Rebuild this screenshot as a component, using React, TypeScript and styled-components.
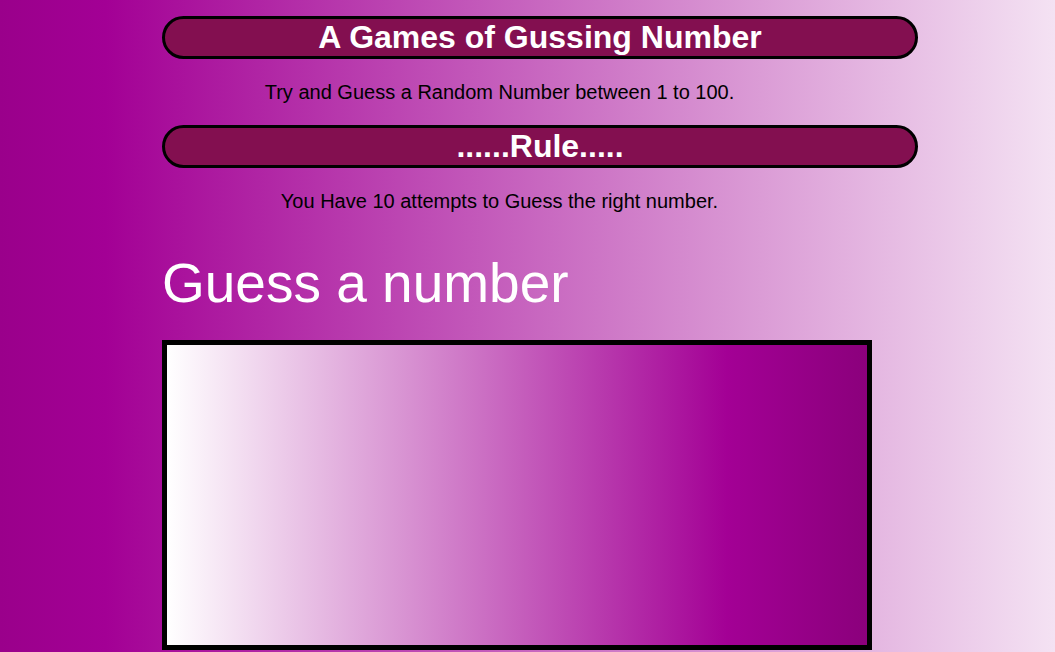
import React from "react";
import styled, { createGlobalStyle } from "styled-components";

const GlobalStyle = createGlobalStyle`
  * {
    box-sizing: border-box;
  }

  body {
    margin: 0;
    font-family: "Liberation Sans", Arial, sans-serif;
  }
`;

const Page = styled.main`
  display: flex;
  flex-direction: column;
  min-height: 100vh;
  padding: 16px 137px 2px 162px;
  background: linear-gradient(90deg, #9a008b 0%, #a30095 10%, #f4e2f3 100%);
`;

const Intro = styled.section`
  display: flex;
  flex-direction: column;
  gap: 22px;
`;

const Banner = styled.h1`
  margin: 0;
  border: 3px solid #000;
  border-radius: 24px;
  background: #830f50;
  color: #fff;
  font-size: 32px;
  line-height: 37px;
  text-align: center;
`;

const Description = styled.p`
  margin: 0;
  padding-right: 81px;
  color: #000;
  font-size: 20px;
  line-height: 22px;
  text-align: center;
`;

const GuessArea = styled.section`
  display: flex;
  flex-direction: column;
  gap: 26px;
  margin-top: 40px;
  padding-right: 46px;
`;

const GuessLabel = styled.label`
  color: #fff;
  font-size: 55px;
  line-height: 62px;
`;

const GuessInput = styled.input`
  width: 100%;
  height: 310px;
  padding: 0 16px;
  border: 5px solid #000;
  border-radius: 0;
  outline: none;
  background: linear-gradient(90deg, #fff 0%, #a30095 80%, #8b007c 100%);
  color: #fff;
  font: inherit;
  font-size: 55px;
  text-align: center;
`;

export default function App() {
  return (
    <>
      <GlobalStyle />
      <Page>
        <Intro>
          <Banner>A Games of Gussing Number</Banner>
          <Description>
            Try and Guess a Random Number between 1 to 100.
          </Description>
          <Banner as="h2">......Rule.....</Banner>
          <Description>
            You Have 10 attempts to Guess the right number.
          </Description>
        </Intro>
        <GuessArea>
          <GuessLabel htmlFor="guess">Guess a number</GuessLabel>
          <GuessInput id="guess" type="text" autoComplete="off" />
        </GuessArea>
      </Page>
    </>
  );
}
